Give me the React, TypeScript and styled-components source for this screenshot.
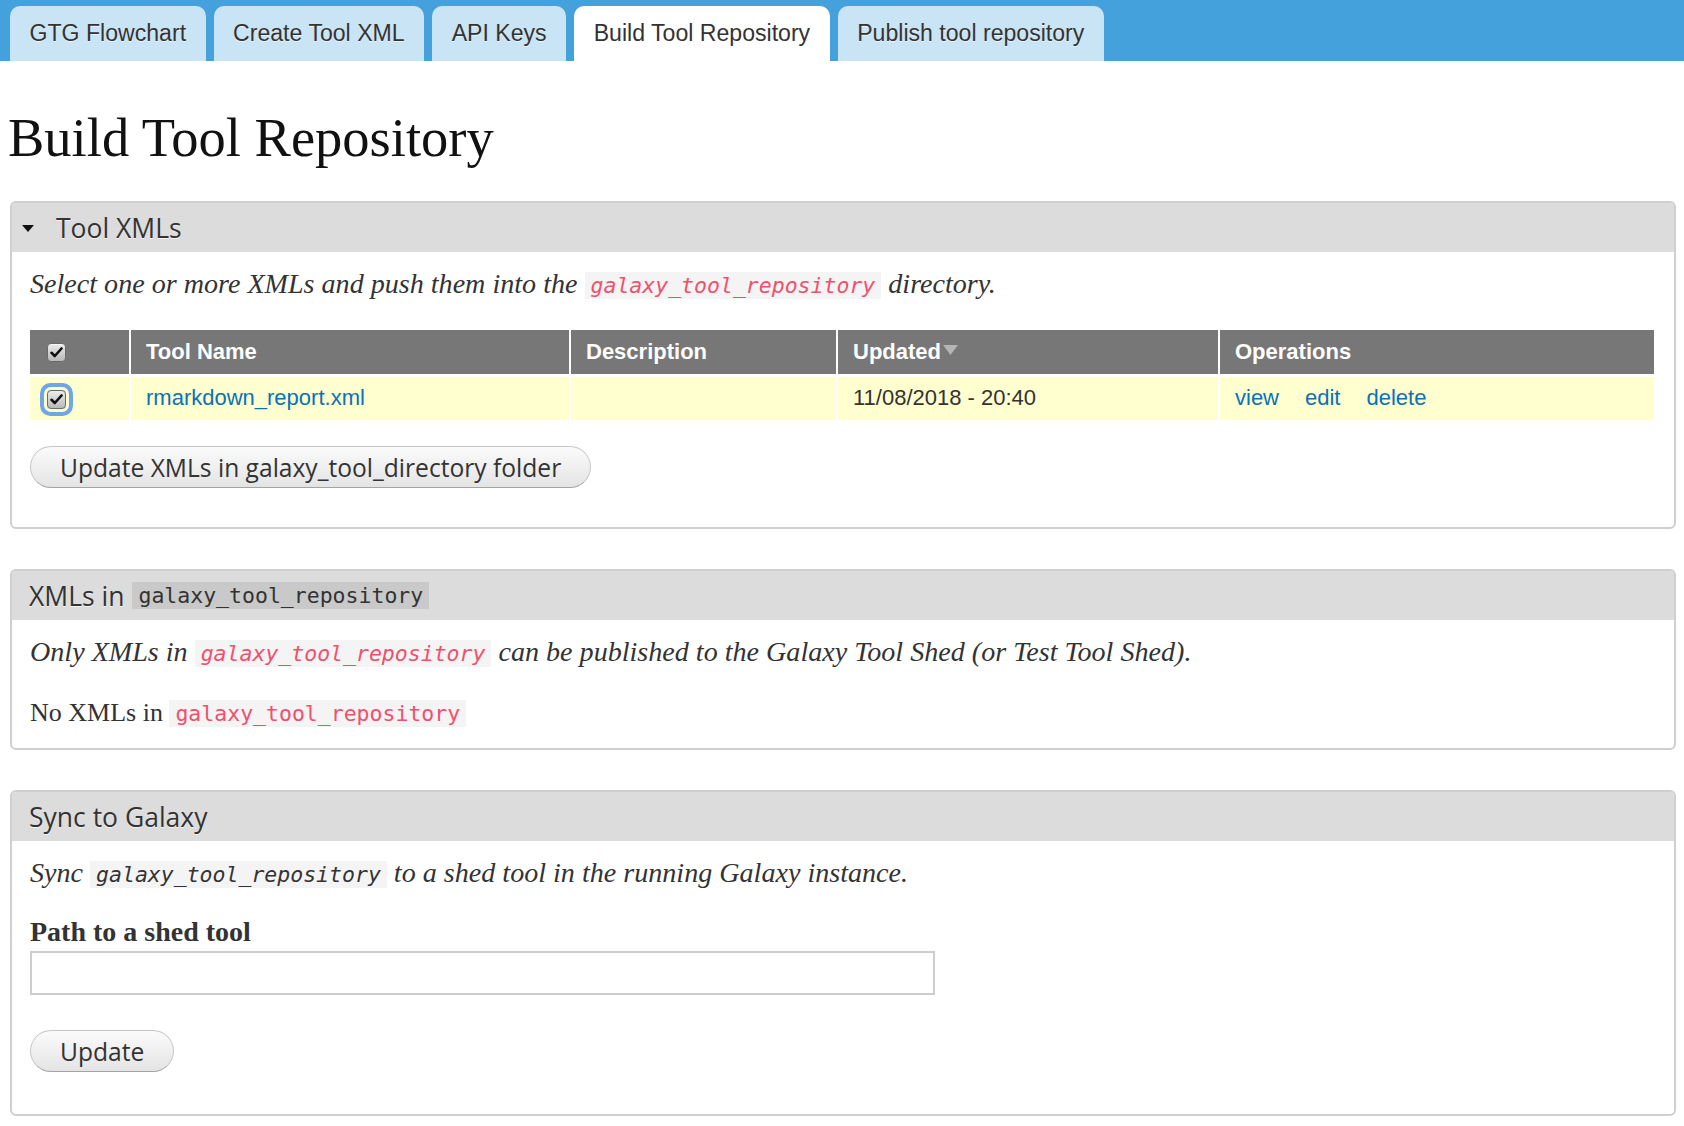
import React from 'react';
import styled, { createGlobalStyle } from 'styled-components';

const GlobalStyle = createGlobalStyle`
  html, body { margin: 0; padding: 0; background: #fff; }
  body { font-family: "Liberation Serif", serif; color: #333; }
`;

const TabBar = styled.nav`
  display: flex;
  align-items: flex-end;
  gap: 8px;
  height: 61px;
  box-sizing: border-box;
  padding: 6px 0 0 10px;
  background: #45a1dc;
`;

const Tab = styled.a<{ $active?: boolean }>`
  display: flex;
  align-items: center;
  height: 55px;
  padding: 0 19.5px;
  border-radius: 10px 10px 0 0;
  background: ${p => (p.$active ? '#ffffff' : '#c9e4f5')};
  font-family: "Liberation Sans", Arial, sans-serif;
  font-size: 23.1px;
  color: #333;
  text-decoration: none;
  text-shadow: 0 1px 0 rgba(255, 255, 255, 0.6);
`;

const Main = styled.main`
  padding: 0 8px 10px 8px;
`;

const Title = styled.h1`
  margin: 44px 0 31px 0;
  font-family: "Liberation Serif", serif;
  font-weight: normal;
  font-size: 54.5px;
  line-height: 65px;
  color: #111;
`;

const Panel = styled.section`
  margin: 0 0 40px 2px;
  border: 2px solid #cfcfcf;
  border-radius: 6px;
  overflow: hidden;
`;

const PanelHeader = styled.div`
  display: flex;
  align-items: center;
  gap: 8px;
  height: 49px;
  padding: 0 17px;
  background: #dcdcdc;
  font-family: "Open Sans", sans-serif;
  font-size: 26.5px;
  color: #333;
  text-shadow: 0 1px 0 rgba(255, 255, 255, 0.7);
`;

const Caret = styled.span`
  display: inline-block;
  width: 0;
  height: 0;
  margin: 2px 14px 0 -7px;
  border-left: 6.5px solid transparent;
  border-right: 6.5px solid transparent;
  border-top: 7px solid #111;
`;

const PanelBody = styled.div<{ $padBottom: number }>`
  display: flex;
  flex-direction: column;
  align-items: flex-start;
  padding: 12px 20px ${p => p.$padBottom}px 18px;
`;

const Para = styled.p<{ $italic?: boolean; $gap?: number }>`
  margin: ${p => p.$gap ?? 0}px 0 0 0;
  font-size: ${p => (p.$italic ? 28.1 : 26)}px;
  font-style: ${p => (p.$italic ? 'italic' : 'normal')};
  line-height: 39px;
  color: #333;
`;

const Code = styled.code<{ $tone?: 'red' | 'dark' | 'header' }>`
  padding: 1px 6px;
  font-family: "DejaVu Sans Mono", monospace;
  font-style: ${p => (p.$tone === 'header' ? 'normal' : 'inherit')};
  font-size: 21.5px;
  color: ${p => (p.$tone === 'red' ? '#f0506e' : '#333')};
  background: ${p => (p.$tone === 'header' ? '#c9c9c9' : '#f4f4f4')};
  text-shadow: none;
`;

const Table = styled.table`
  width: 100%;
  margin-top: 25px;
  border-collapse: collapse;
  font-family: "Liberation Sans", Arial, sans-serif;
  font-size: 22px;
`;

const Th = styled.th<{ $w?: number }>`
  width: ${p => (p.$w ? `${p.$w}px` : 'auto')};
  height: 45px;
  padding: 0 15px;
  box-sizing: border-box;
  background: #777;
  color: #fff;
  text-align: left;
  font-weight: bold;
  border-left: 2px solid #fff;
  &:first-child { border-left: none; }
`;

const Td = styled.td`
  height: 45px;
  padding: 0 15px;
  box-sizing: border-box;
  background: #ffffcf;
  color: #333;
  border-top: 3px solid #fff;
  border-left: 2px solid #fff;
  &:first-child { border-left: none; }
`;

const Link = styled.a`
  color: #0b72b5;
  text-decoration: none;
`;

const Ops = styled.div`
  display: flex;
  gap: 26px;
`;

const SortArrow = styled.svg`
  display: inline-block;
  margin-left: 1px;
  vertical-align: 4px;
`;

const Check = styled.span<{ $focused?: boolean }>`
  display: inline-flex;
  align-items: center;
  justify-content: center;
  width: 19px;
  height: 19px;
  margin-left: 2px;
  vertical-align: middle;
  box-sizing: border-box;
  border: 1px solid #6a6a6a;
  border-radius: 4px;
  background: linear-gradient(#ececec, #b9b9b9);
  box-shadow: ${p =>
    p.$focused ? '0 0 0 3px #ffffcf, 0 0 0 7px #6fa6e6' : 'inset 0 1px 0 rgba(255,255,255,.6)'};
`;

const Button = styled.button`
  height: 42px;
  padding: 0 29px;
  border: 1px solid #c6c6c6;
  border-bottom-color: #a4a4a4;
  border-radius: 21px;
  background: linear-gradient(#fbfbfb, #e4e4e4);
  font-family: "Open Sans", sans-serif;
  font-size: 24.6px;
  color: #333;
  cursor: pointer;
`;

const Label = styled.label`
  display: block;
  margin-top: 18px;
  font-size: 28px;
  font-weight: bold;
  line-height: 39px;
  color: #333;
`;

const TextInput = styled.input`
  width: 905px;
  height: 44px;
  box-sizing: border-box;
  border: 2px solid #cdcdcd;
  padding: 0 8px;
  font-size: 20px;
`;

const ButtonRow = styled.div<{ $gap: number }>`
  margin-top: ${p => p.$gap}px;
`;

const CheckMark = () => (
  <svg width="13" height="11" viewBox="0 0 13 11">
    <path d="M1.5 5.8 L4.8 9 L11.5 1.5" fill="none" stroke="#111" strokeWidth="2.6" strokeLinecap="round" strokeLinejoin="round" />
  </svg>
);

const tabs = ['GTG Flowchart', 'Create Tool XML', 'API Keys', 'Build Tool Repository', 'Publish tool repository'];

export default function App() {
  return (
    <>
      <GlobalStyle />
      <TabBar>
        {tabs.map(t => (
          <Tab key={t} href="#" $active={t === 'Build Tool Repository'}>
            {t}
          </Tab>
        ))}
      </TabBar>
      <Main>
        <Title>Build Tool Repository</Title>

        <Panel>
          <PanelHeader>
            <Caret />
            Tool XMLs
          </PanelHeader>
          <PanelBody $padBottom={39}>
            <Para $italic>
              Select one or more XMLs and push them into the <Code $tone="red">galaxy_tool_repository</Code> directory.
            </Para>
            <Table>
              <thead>
                <tr>
                  <Th $w={100}>
                    <Check><CheckMark /></Check>
                  </Th>
                  <Th $w={440}>Tool Name</Th>
                  <Th $w={267}>Description</Th>
                  <Th $w={382}>
                    Updated
                    <SortArrow width="17" height="10" viewBox="0 0 17 10">
                      <path d="M1 0 H16 L8.5 10 Z" fill="#b4b4b4" />
                    </SortArrow>
                  </Th>
                  <Th>Operations</Th>
                </tr>
              </thead>
              <tbody>
                <tr>
                  <Td>
                    <Check $focused><CheckMark /></Check>
                  </Td>
                  <Td>
                    <Link href="#">rmarkdown_report.xml</Link>
                  </Td>
                  <Td />
                  <Td>11/08/2018 - 20:40</Td>
                  <Td>
                    <Ops>
                      <Link href="#">view</Link>
                      <Link href="#">edit</Link>
                      <Link href="#">delete</Link>
                    </Ops>
                  </Td>
                </tr>
              </tbody>
            </Table>
            <ButtonRow $gap={26}>
              <Button>Update XMLs in galaxy_tool_directory folder</Button>
            </ButtonRow>
          </PanelBody>
        </Panel>

        <Panel>
          <PanelHeader>
            XMLs in <Code $tone="header">galaxy_tool_repository</Code>
          </PanelHeader>
          <PanelBody $padBottom={15}>
            <Para $italic>
              Only XMLs in <Code $tone="red">galaxy_tool_repository</Code> can be published to the Galaxy Tool Shed (or Test Tool Shed).
            </Para>
            <Para $gap={20}>
              No XMLs in <Code $tone="red">galaxy_tool_repository</Code>
            </Para>
          </PanelBody>
        </Panel>

        <Panel>
          <PanelHeader>Sync to Galaxy</PanelHeader>
          <PanelBody $padBottom={42}>
            <Para $italic>
              Sync <Code $tone="dark">galaxy_tool_repository</Code> to a shed tool in the running Galaxy instance.
            </Para>
            <Label htmlFor="shed-path">Path to a shed tool</Label>
            <TextInput id="shed-path" type="text" />
            <ButtonRow $gap={35}>
              <Button>Update</Button>
            </ButtonRow>
          </PanelBody>
        </Panel>
      </Main>
    </>
  );
}
